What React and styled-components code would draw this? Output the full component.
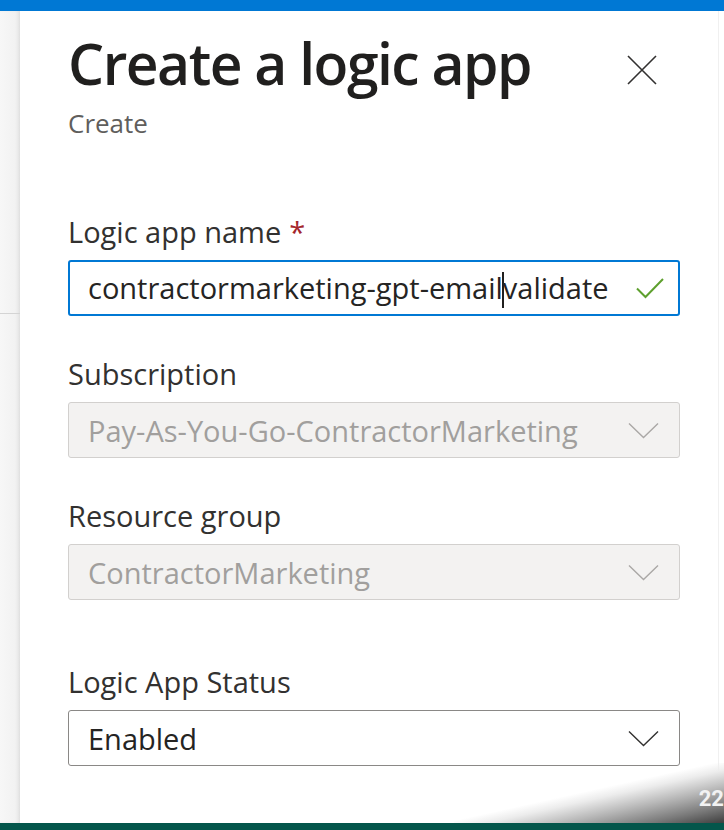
import styled, { createGlobalStyle } from 'styled-components';

const GlobalStyle = createGlobalStyle`
  body {
    margin: 0;
    background: #fff;
    font-family: 'Open Sans', 'Noto Sans', sans-serif;
  }
`;

const Page = styled.div`
  position: relative;
  height: 830px;
  display: flex;
  flex-direction: column;
  overflow: hidden;
`;

const TopBar = styled.div`
  flex: none;
  height: 11px;
  background: #0078d4;
`;

const Main = styled.div`
  flex: 1;
  display: flex;
`;

const Rail = styled.div`
  flex: none;
  width: 20px;
  background: linear-gradient(to right, #f7f7f7, #f0f0f0);
  box-shadow: inset -3px 0 4px -2px rgba(0, 0, 0, 0.1);
`;

const RailRule = styled.div`
  margin-top: 302px;
  height: 1px;
  background: #d4d4d4;
`;

const Panel = styled.div`
  flex: 1;
  display: flex;
  flex-direction: column;
  padding: 18px 38px 0 48px;
`;

const Edge = styled.div`
  flex: none;
  width: 5px;
  border-left: 1px solid #f0f0f0;
`;

const Header = styled.div`
  display: flex;
  justify-content: space-between;
  align-items: flex-start;
`;

const Title = styled.h1`
  margin: 0;
  font-size: 57px;
  line-height: 68px;
  font-weight: 600;
  letter-spacing: -1.5px;
  color: #201f1e;
`;

const CloseButton = styled.button`
  margin: 26px 23px 0 0;
  padding: 0;
  border: 0;
  background: none;
  width: 30px;
  height: 30px;
  display: flex;
`;

const Subtitle = styled.div`
  margin-top: 11px;
  font-size: 26px;
  line-height: 30px;
  color: #605e5c;
`;

const Group = styled.div`
  display: flex;
  flex-direction: column;
  gap: 11px;
  margin-top: ${(p) => p.$gap}px;
`;

const Label = styled.label`
  font-size: 29px;
  line-height: 34px;
  color: #323130;
`;

const Required = styled.span`
  color: #a4262c;
  margin-left: 8px;
`;

const Field = styled.div`
  box-sizing: border-box;
  height: 56px;
  display: flex;
  align-items: center;
  justify-content: space-between;
  padding: 0 ${(p) => (p.$focused ? 14 : 20)}px 0 ${(p) => (p.$focused ? 18 : 19)}px;
  border: ${(p) => (p.$focused ? '2px solid #0078d4' : p.$disabled ? '1px solid #d2d0ce' : '1px solid #8a8886')};
  border-radius: 3px;
  background: ${(p) => (p.$disabled ? '#f3f2f1' : '#fff')};
  color: ${(p) => (p.$disabled ? '#a19f9d' : '#252423')};
  font-size: 29px;
`;

const Value = styled.span`
  white-space: nowrap;
`;

const Caret = styled.span`
  display: inline-block;
  width: 2px;
  height: 36px;
  margin: 0 -1px;
  vertical-align: -9px;
  background: #201f1e;
`;

const Corner = styled.div`
  position: absolute;
  right: 0;
  bottom: 7px;
  width: 270px;
  height: 60px;
  background: linear-gradient(
    to top left,
    #3e3e3e 0%,
    #7a7a7a 14%,
    #b8b8b8 30%,
    #ececec 44%,
    rgba(255, 255, 255, 0) 52%
  );
`;

const PageNumber = styled.span`
  position: absolute;
  right: 0;
  bottom: 19px;
  font-family: Roboto, 'Liberation Sans', sans-serif;
  font-weight: 700;
  font-size: 22px;
  line-height: 24px;
  color: #f2f2f2;
`;

const BottomBar = styled.div`
  flex: none;
  height: 7px;
  background: #04564b;
`;

const Chevron = ({ color }) => (
  <svg width="31" height="17" viewBox="0 0 31 17" fill="none">
    <path d="M1 1.5 L15.5 15.5 L30 1.5" stroke={color} strokeWidth="1.4" />
  </svg>
);

const Check = () => (
  <svg width="28" height="21" viewBox="0 0 28 21" fill="none">
    <path d="M1 10.5 L9.5 19 L27 1" stroke="#5ea02e" strokeWidth="2" />
  </svg>
);

const Dropdown = ({ label, value, disabled, gap }) => (
  <Group $gap={gap}>
    <Label>{label}</Label>
    <Field $disabled={disabled}>
      <Value>{value}</Value>
      <Chevron color={disabled ? '#aaa8a6' : '#323130'} />
    </Field>
  </Group>
);

export default function App() {
  return (
    <Page>
      <GlobalStyle />
      <TopBar />
      <Main>
        <Rail>
          <RailRule />
        </Rail>
        <Panel>
          <Header>
            <Title>Create a logic app</Title>
            <CloseButton aria-label="Close">
              <svg width="30" height="30" viewBox="0 0 30 30" fill="none">
                <path d="M1 1 L29 29 M29 1 L1 29" stroke="#323130" strokeWidth="1.6" />
              </svg>
            </CloseButton>
          </Header>
          <Subtitle>Create</Subtitle>

          <Group $gap={77}>
            <Label>
              Logic app name<Required>*</Required>
            </Label>
            <Field $focused>
              <Value>
                contractormarketing-gpt-email<Caret />validate
              </Value>
              <Check />
            </Field>
          </Group>

          <Dropdown gap={41} label="Subscription" value="Pay-As-You-Go-ContractorMarketing" disabled />
          <Dropdown gap={41} label="Resource group" value="ContractorMarketing" disabled />
          <Dropdown gap={65} label="Logic App Status" value="Enabled" />
        </Panel>
        <Edge />
      </Main>
      <BottomBar />
      <Corner />
      <PageNumber>22</PageNumber>
    </Page>
  );
}
